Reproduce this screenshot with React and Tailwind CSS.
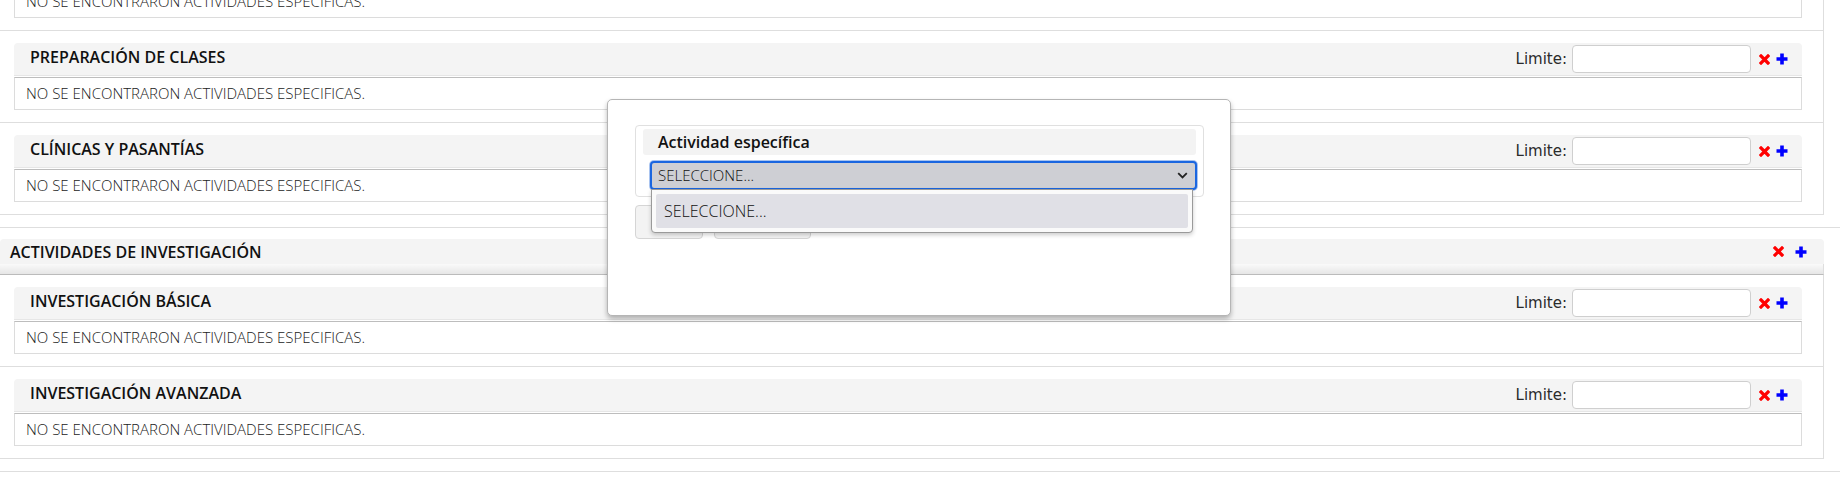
import { Fragment } from "react"

const sans = "font-['Open_Sans',sans-serif]"

function DelIcon() {
  return (
    <svg width="11" height="11" viewBox="0 0 11 11" className="shrink-0">
      <path d="M2 2 L9 9 M9 2 L2 9" stroke="#f00" strokeWidth="3.2" strokeLinecap="square" />
    </svg>
  )
}

function AddIcon() {
  return (
    <svg width="12" height="12" viewBox="0 0 12 12" className="shrink-0">
      <path d="M6 0.5 V11.5 M0.5 6 H11.5" stroke="#00f" strokeWidth="3.6" />
    </svg>
  )
}

function EmptyBox() {
  return (
    <div className={`h-[33px] border border-[#dcdcdc] border-t-[#bdbdbd] flex items-center pl-[11px] text-[15px] font-light text-[#222] ${sans}`}>
      NO SE ENCONTRARON ACTIVIDADES ESPECIFICAS.
    </div>
  )
}

function SubBlock({ title }) {
  return (
    <div className="border-b border-[#dedede] pl-[14px] pr-[21px] pt-[12px] pb-[12px]">
      <div className="h-[33px] bg-[#f4f4f4] rounded-t-[4px] border-b border-[#e6e6e6] flex items-center justify-between pl-[16px] pr-[14px]">
        <span className={`text-[16px] font-semibold text-[#111] mb-[5px] ${sans}`}>{title}</span>
        <div className="flex items-center">
          <span className="font-['DejaVu_Sans',sans-serif] text-[15px] text-[#2b2b2b] mr-[5px]">Limite:</span>
          <input className="w-[179px] h-[28px] bg-white border border-[#cfcfcf] rounded-[4px] mr-[8px]" />
          <DelIcon />
          <span className="w-[6px]" />
          <AddIcon />
        </div>
      </div>
      <div className="mt-[1px]">
        <EmptyBox />
      </div>
    </div>
  )
}

function Category({ title, subs, partial, children }) {
  return (
    <div className={`border-b border-[#dedede] pb-[12px] ${partial ? "-mt-[15px]" : "pt-[11px]"}`}>
      {title && (
        <Fragment>
          <div className="w-[1824px] h-[25px] bg-[#f4f4f4] rounded-t-[4px] flex items-center justify-between pl-[10px] pr-[17px]">
            <span className={`text-[16px] font-semibold text-[#111] ${sans}`}>{title}</span>
            <div className="flex items-center gap-[11px]">
              <DelIcon />
              <AddIcon />
            </div>
          </div>
          <div className="w-[1824px] h-[11px] border-r border-b border-r-[#dedede] border-b-[#bbb] bg-gradient-to-b from-[#fafafa] to-[#e6e6e6]" />
        </Fragment>
      )}
      <div className="w-[1824px] border-r border-[#dedede]">
        {children}
        {subs.map((s) => (
          <SubBlock key={s} title={s} />
        ))}
      </div>
    </div>
  )
}

function Modal() {
  return (
    <div className="absolute left-[607px] top-[99px] w-[624px] h-[217px] bg-white border border-[#b5b5b5] rounded-[5px] shadow-[0_3px_5px_rgba(0,0,0,0.28)] pt-[25px] pl-[27px] pr-[26px]">
      <div className="h-[72px] border border-[#e0e0e0] rounded-[4px] pt-[3px]">
        <div className={`mx-[7px] h-[26px] bg-[#f3f3f3] rounded-[3px] flex items-center pl-[15px] text-[16px] font-semibold text-[#111] ${sans}`}>
          Actividad específica
        </div>
        <div className="mt-[6px] ml-[14px] mr-[6px] h-[29px] rounded-[4px] bg-[#cecfd4] border-2 border-[#1a66e0] shadow-[0_0_0_1px_#a9c4f0] flex items-center justify-between pl-[6px] pr-[7px]">
          <span className={`text-[15px] font-light text-[#111] ${sans}`}>SELECCIONE...</span>
          <svg width="11" height="7" viewBox="0 0 11 7">
            <path d="M1.2 1.2 L5.5 5.5 L9.8 1.2" fill="none" stroke="#222" strokeWidth="1.8" />
          </svg>
        </div>
      </div>
      <div className="mt-[8px] flex gap-[11px]">
        <button aria-label="Guardar" className="w-[68px] h-[34px] rounded-[4px] border border-[#d5d5d5] bg-[#f3f3f3]" />
        <button aria-label="Cancelar" className="w-[97px] h-[34px] rounded-[4px] border border-[#d5d5d5] bg-[#f3f3f3]" />
      </div>
      <div className="absolute left-[43px] top-[89px] w-[542px] h-[44px] bg-[#fafafa] border border-[#9a9a9a] rounded-b-[4px] shadow-[0_2px_4px_rgba(0,0,0,0.2)] p-[4px]">
        <div className={`h-[34px] rounded-[2px] bg-[#e0e0e6] flex items-center pl-[8px] text-[16px] font-light text-[#111] ${sans}`}>
          SELECCIONE...
        </div>
      </div>
    </div>
  )
}

export default function App() {
  return (
    <div className="relative w-[1840px] h-[480px] overflow-hidden bg-white">
      <Category partial subs={["PREPARACIÓN DE CLASES", "CLÍNICAS Y PASANTÍAS"]}>
        <div className="border-b border-[#dedede] pl-[14px] pr-[21px] pb-[12px]">
          <EmptyBox />
        </div>
      </Category>
      <Category title="ACTIVIDADES DE INVESTIGACIÓN" subs={["INVESTIGACIÓN BÁSICA", "INVESTIGACIÓN AVANZADA"]} />
      <Modal />
    </div>
  )
}
